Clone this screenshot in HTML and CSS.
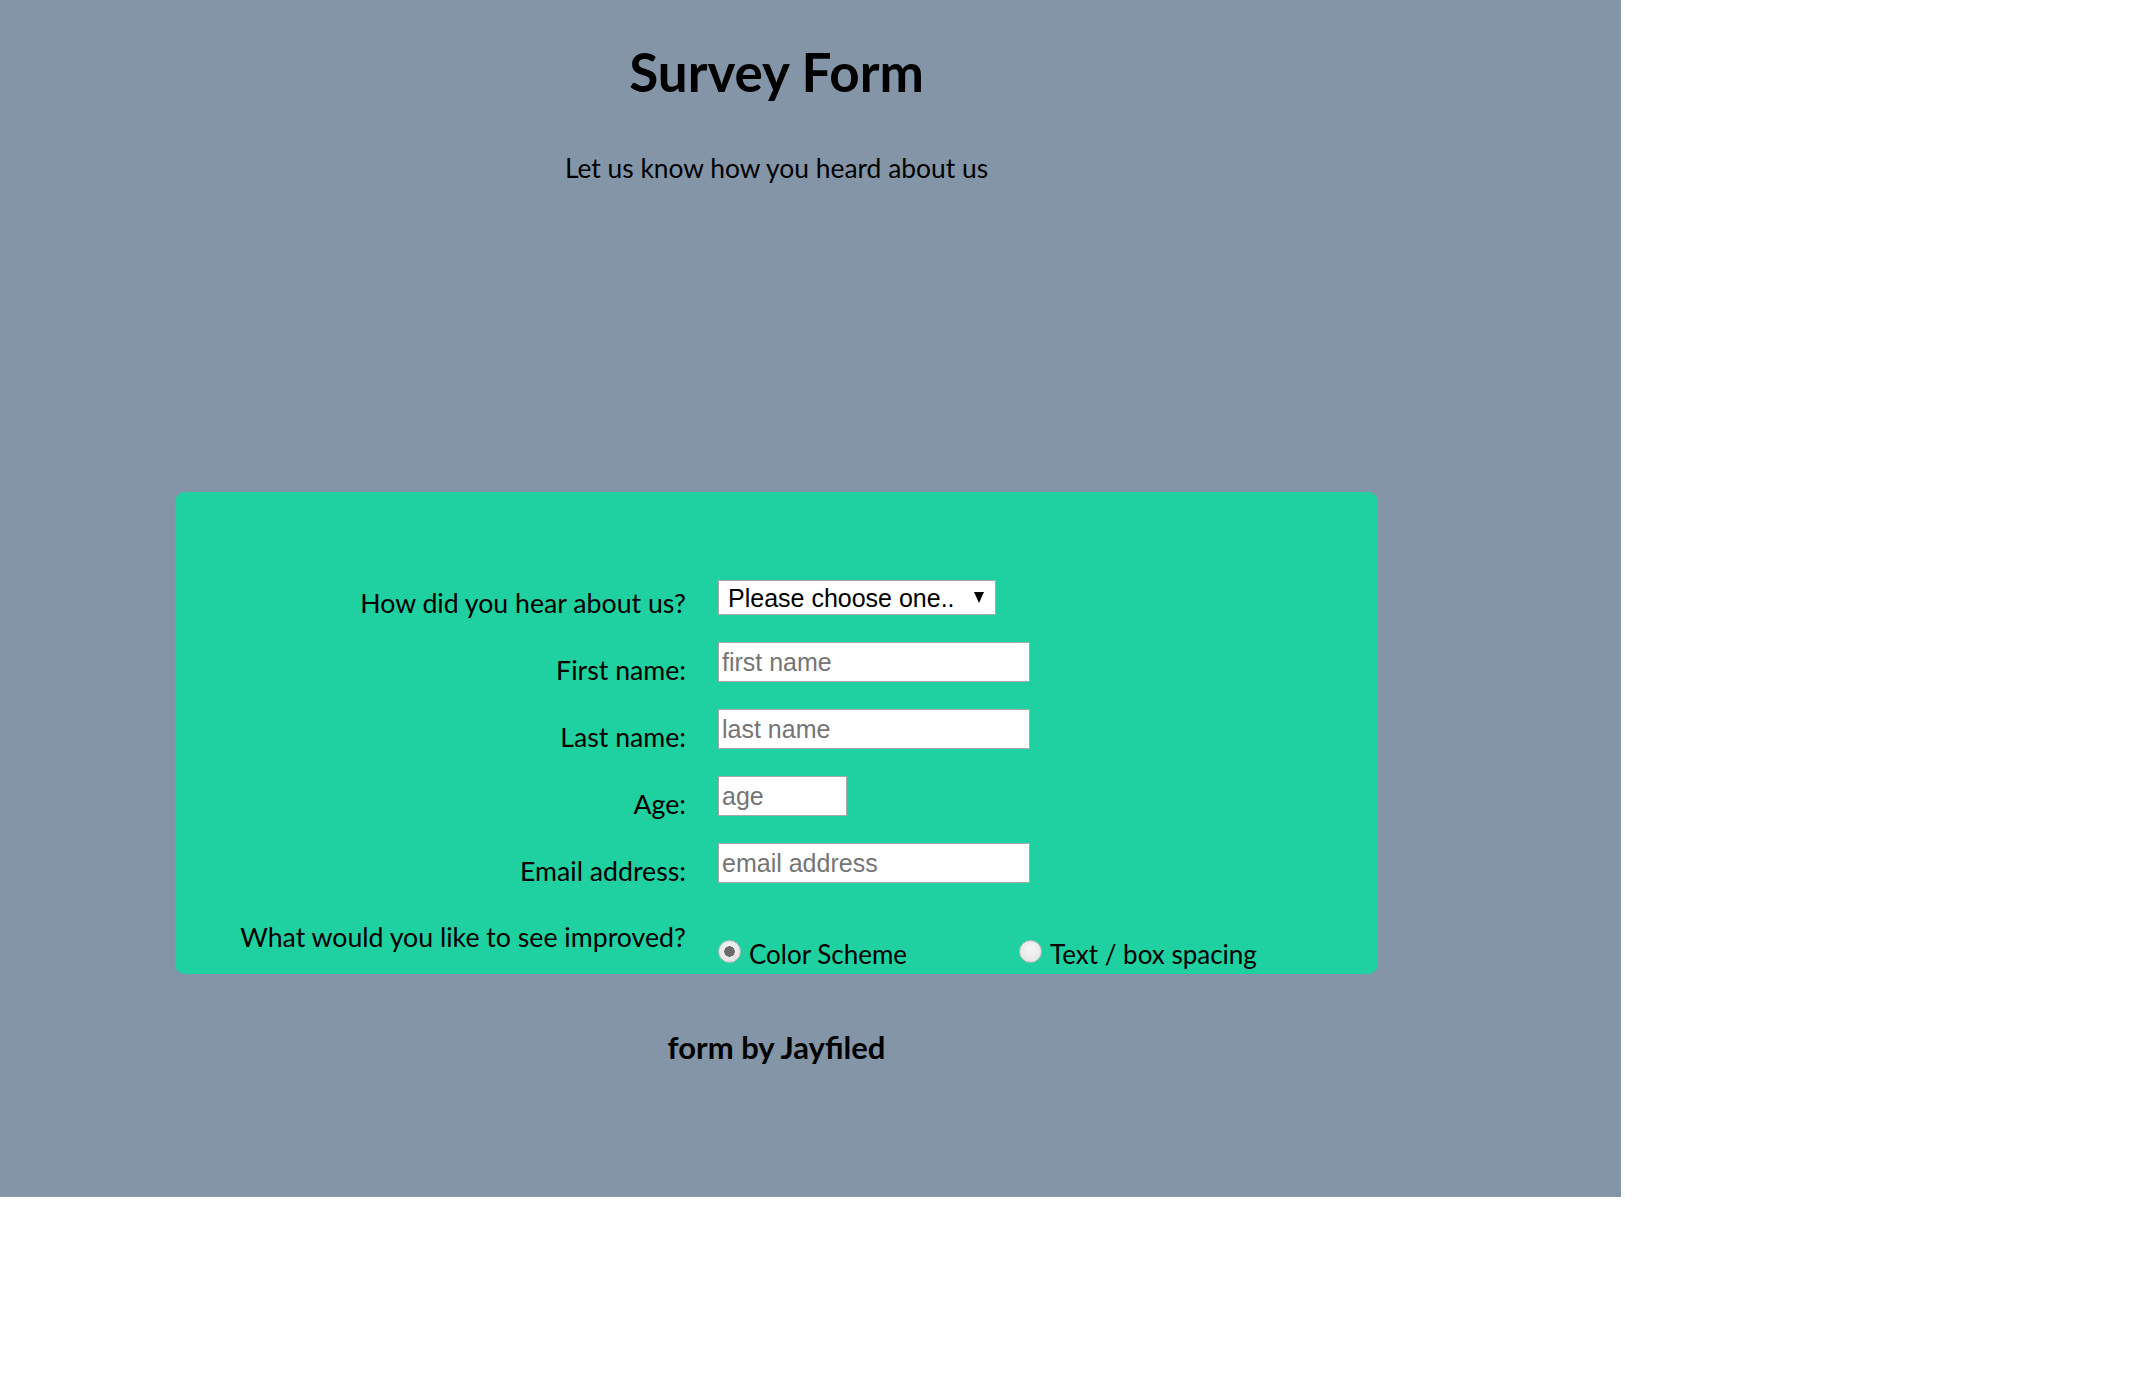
FILE: index.html
```html
<!DOCTYPE html>
<html lang="en">
<head>
<meta charset="utf-8">
<title>Survey Form</title>
<link rel="stylesheet" href="styles.css">
</head>
<body>
<div class="page">
  <div class="inner">
    <h1 class="title">Survey Form</h1>
    <p class="subtitle">Let us know how you heard about us</p>
    <form class="card">
      <div class="row">
        <label class="label" for="source">How did you hear about us?</label>
        <span class="select-wrap">
          <select id="source" class="select">
            <option>Please choose one..</option>
            <option>Friend</option>
            <option>Internet</option>
          </select>
        </span>
      </div>
      <div class="row">
        <label class="label" for="first">First name:</label>
        <input id="first" class="field" type="text" placeholder="first name">
      </div>
      <div class="row">
        <label class="label" for="last">Last name:</label>
        <input id="last" class="field" type="text" placeholder="last name">
      </div>
      <div class="row">
        <label class="label" for="age">Age:</label>
        <input id="age" class="field field-age" type="text" placeholder="age">
      </div>
      <div class="row">
        <label class="label" for="email">Email address:</label>
        <input id="email" class="field" type="text" placeholder="email address">
      </div>
      <div class="row row-radio">
        <span class="label">What would you like to see improved?</span>
        <div class="options">
          <label class="option"><input class="radio" type="radio" name="improve" checked>Color Scheme</label>
          <label class="option"><input class="radio" type="radio" name="improve">Text / box spacing</label>
        </div>
      </div>
    </form>
    <h3 class="footer">form by Jayfiled</h3>
  </div>
</div>
</body>
</html>
```

FILE: styles.css
```css
html, body {
  margin: 0;
  padding: 0;
  background: #ffffff;
}

body {
  font-family: Lato, "Open Sans", sans-serif;
  color: #000;
}

.page {
  width: 1621px;
  height: 1197px;
  background: #8395a7;
  overflow: hidden;
}

.inner {
  width: 1553px;
  text-align: center;
}

.title {
  margin: 41px 0 0;
  font-size: 53px;
  line-height: 62px;
  font-weight: 700;
}

.subtitle {
  margin: 49px 0 0;
  font-size: 26.4px;
  line-height: 32px;
  font-weight: 400;
}

.card {
  box-sizing: border-box;
  margin: 308px 175px 0;
  height: 482px;
  padding-top: 88px;
  background: #1fd1a1;
  border-radius: 10px;
  display: flex;
  flex-direction: column;
  gap: 27px;
  text-align: left;
}

.row {
  display: flex;
  align-items: flex-end;
  gap: 32px;
}

.label {
  width: 511px;
  flex: none;
  text-align: right;
  font-size: 26.7px;
  line-height: 32px;
  margin-bottom: -4px;
}

.select-wrap {
  position: relative;
  display: inline-block;
}

.select-wrap::after {
  content: "";
  position: absolute;
  right: 12px;
  top: 12px;
  width: 0;
  height: 0;
  border-left: 5.5px solid transparent;
  border-right: 5.5px solid transparent;
  border-top: 11px solid #000;
  pointer-events: none;
}

.select {
  -webkit-appearance: none;
  appearance: none;
  box-sizing: border-box;
  width: 278px;
  height: 35px;
  margin: 0;
  padding: 0 30px 0 9px;
  border: 1px solid #a9a9a9;
  border-radius: 0;
  background: #fff;
  font-family: "Liberation Sans", Arial, sans-serif;
  font-size: 25px;
  color: #000;
  display: block;
}

.field {
  box-sizing: border-box;
  width: 312px;
  height: 40px;
  margin: 0;
  padding: 0 3px;
  border: 1px solid #a9a9a9;
  border-radius: 0;
  background: #fff;
  font-family: "Liberation Sans", Arial, sans-serif;
  font-size: 25px;
  color: #000;
  outline: none;
}

.field::placeholder {
  color: #757575;
}

.field-age {
  width: 129px;
}

.row-radio {
  align-items: flex-start;
  margin-top: 11px;
}

.row-radio .label {
  margin-bottom: 0;
}

.options {
  display: flex;
  margin-top: 17px;
}

.option {
  width: 301px;
  display: flex;
  align-items: flex-start;
  font-size: 26px;
  line-height: 32px;
}

.radio {
  -webkit-appearance: none;
  appearance: none;
  box-sizing: border-box;
  width: 23px;
  height: 23px;
  margin: 2px 8px 0 0;
  border: 1px solid #b5b5b5;
  border-radius: 50%;
  background: radial-gradient(circle at 50% 40%, #f7f7f7 0%, #e6e6e6 70%, #d4d4d4 100%);
  flex: none;
}

.radio:checked {
  background:
    radial-gradient(circle, #6b6b6b 0, #6b6b6b 5px, transparent 5.5px),
    radial-gradient(circle at 50% 40%, #f7f7f7 0%, #e6e6e6 70%, #d4d4d4 100%);
}

.footer {
  margin: 54px 0 0;
  font-size: 31px;
  line-height: 38px;
  font-weight: 700;
}
```
